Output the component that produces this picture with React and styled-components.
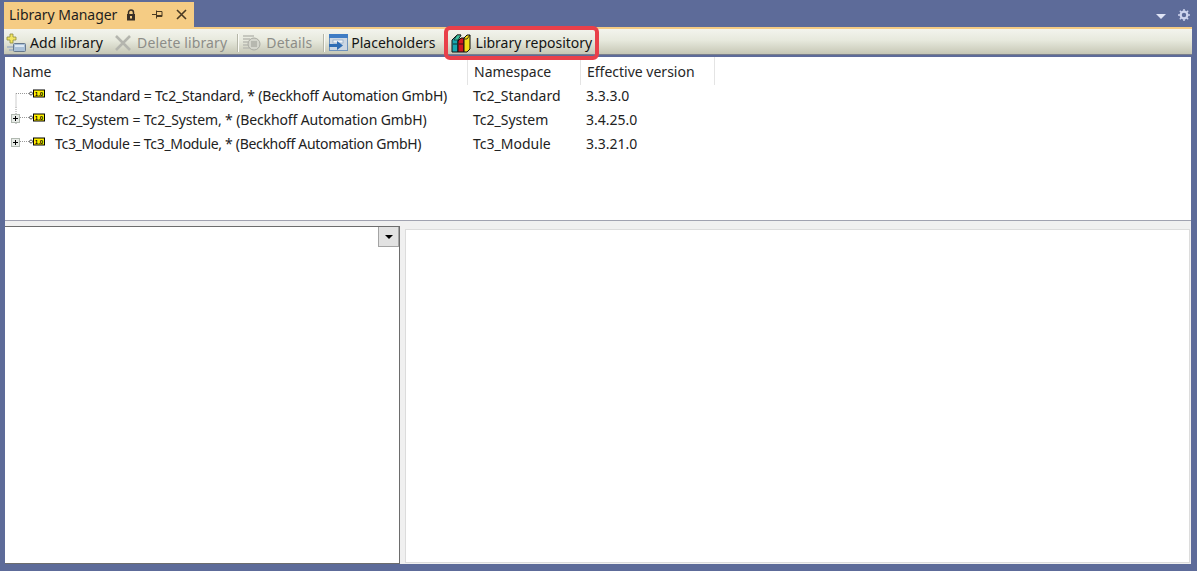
import React from 'react';
import styled, { createGlobalStyle } from 'styled-components';

const GlobalStyle = createGlobalStyle`
    html, body {
        margin: 0;
        padding: 0;
        background: #5d6b99;
    }
    * {
        box-sizing: border-box;
    }
`;

const Window = styled.div`
    width: 1197px;
    height: 571px;
    padding: 2px 5px 7px 4px;
    display: flex;
    flex-direction: column;
    overflow: hidden;
    background: #5d6b99;
    font-family: "Noto Sans", "Open Sans", sans-serif;
    font-size: 14px;
    color: #1b1b1b;
`;

const TitleRow = styled.div`
    height: 25px;
    display: flex;
    justify-content: space-between;
    flex-shrink: 0;
`;

const Tab = styled.div`
    width: 190px;
    height: 25px;
    display: flex;
    align-items: center;
    padding-left: 5px;
    background: #f5cc84;
    color: #1e1e1e;
`;

const TabTitle = styled.span`
    width: 117px;
    white-space: nowrap;
    letter-spacing: -0.03px;
`;

const TabIcon = styled.svg`
    display: block;
    flex-shrink: 0;
    margin-right: ${(props) => props.gap || 0}px;
`;

const WindowControls = styled.div`
    display: flex;
    align-items: flex-start;
    gap: 12px;
    padding: 7px 2px 0 0;
`;

const MenuArrow = styled.svg`
    display: block;
    margin-top: 5px;
`;

const Toolbar = styled.div`
    height: 28px;
    flex-shrink: 0;
    display: flex;
    align-items: center;
    padding: 2px 0 0 2px;
    border-top: 2px solid #f5cc84;
    background: linear-gradient(#f3f4ee, #e7e9dd 45%, #c6c7b5);
    border-bottom: 1px solid #7a7f8c;
`;

const ToolButton = styled.div`
    height: 24px;
    display: flex;
    align-items: center;
    gap: ${(props) => props.gap || 4}px;
    padding-right: ${(props) => props.pad || 4}px;
    white-space: nowrap;
    color: ${(props) => (props.disabled ? '#8d8d88' : '#141414')};
    letter-spacing: ${(props) => props.spacing || 0}px;
    position: relative;
`;

const Highlight = styled.div`
    position: absolute;
    left: -6px;
    right: -3px;
    top: -5px;
    bottom: -5px;
    border: 4px solid #e9404a;
    border-radius: 6px;
    pointer-events: none;
`;

const ToolSeparator = styled.div`
    width: 2px;
    height: 18px;
    margin: 0 3px 0 1px;
    background: #b5b6a8;
    border-right: 1px solid #fbfbf6;
`;

const ListPane = styled.div`
    height: 163px;
    flex-shrink: 0;
    margin: 2px 1px 0 1px;
    background: #ffffff;
`;

const HeaderRow = styled.div`
    height: 26px;
    display: flex;
`;

const HeaderCell = styled.div`
    width: ${(props) => props.width}px;
    height: 28px;
    padding: 5px 0 0 ${(props) => props.pad || 6}px;
    border-right: 1px solid #e4e4e4;
    color: #262626;
`;

const TreeRow = styled.div`
    height: 24px;
    display: flex;
    align-items: center;
`;

const TreeLead = styled.div`
    width: 50px;
    height: 24px;
    flex-shrink: 0;
`;

const TreeCell = styled.div`
    width: ${(props) => props.width}px;
    flex-shrink: 0;
    white-space: nowrap;
    color: #222222;
    letter-spacing: ${(props) => props.spacing || 0}px;
`;

const Splitter = styled.div`
    height: 6px;
    flex-shrink: 0;
    margin: 0 1px;
    background: #f0f0f0;
    border-top: 1px solid #a0a2b0;
`;

const BottomArea = styled.div`
    flex: 1;
    min-height: 0;
    margin: 0 1px;
    display: flex;
    background: #f0f0f0;
`;

const LeftPane = styled.div`
    width: 395px;
    display: flex;
    justify-content: flex-end;
    align-items: flex-start;
    background: #ffffff;
    border-top: 1px solid #6d6d6d;
    border-right: 1px solid #6d6d6d;
    border-bottom: 1px solid #6d6d6d;
`;

const ComboButton = styled.div`
    width: 21px;
    height: 20px;
    display: flex;
    align-items: center;
    justify-content: center;
    background: #e2e2e2;
    border: 1px solid #a4a4a4;
    border-top: 0;
`;

const ComboArrow = styled.div`
    width: 0;
    height: 0;
    border-left: 4px solid transparent;
    border-right: 4px solid transparent;
    border-top: 4px solid #000000;
`;

const RightPane = styled.div`
    flex: 1;
    margin: 3px 1px 1px 5px;
    background: #ffffff;
    border: 1px solid #dcdcdc;
`;

const BadgeText = styled.text`
    font-family: "Liberation Sans", sans-serif;
    font-size: 6px;
    font-weight: 700;
    fill: #000000;
    text-anchor: middle;
`;

const LockIcon = () => (
    <TabIcon width="10" height="12" viewBox="0 0 10 12" gap={16}>
        <path d="M2.5 5.5V3.5a2.5 2.5 0 0 1 5 0v2" fill="none" stroke="#3a3026" strokeWidth="1.5" />
        <rect x="1" y="5" width="8" height="6.5" fill="#3a3026" />
        <rect x="4" y="7" width="2" height="2.5" fill="#f5cc84" />
    </TabIcon>
);

const PinIcon = () => (
    <TabIcon width="11" height="11" viewBox="0 0 11 11" gap={13}>
        <path d="M0 5.5h4M4.5 1.5v8M4.5 2.5h5.5v5h-5.5M4.5 6.5h5.5" fill="none" stroke="#4a3a22" strokeWidth="1" />
    </TabIcon>
);

const CloseIcon = () => (
    <TabIcon width="11" height="11" viewBox="0 0 11 11">
        <path d="M1 1l9 9M10 1l-9 9" stroke="#4a3a22" strokeWidth="1.6" />
    </TabIcon>
);

const AddLibraryIcon = () => (
    <svg width="21" height="20" viewBox="0 0 21 20">
        <rect x="7.5" y="10.5" width="12" height="8" rx="1" fill="#a9c0d8" stroke="#66788c" />
        <rect x="9" y="12" width="9" height="2" fill="#dde8f2" />
        <path d="M1 14h6M3 17h4" stroke="#9fb0c2" strokeWidth="1.5" />
        <path d="M4 1h3v3h3v3H7v3H4V7H1V4h3z" fill="#f2e460" stroke="#8d8a3c" strokeWidth="0.8" />
    </svg>
);

const DeleteIcon = () => (
    <svg width="19" height="18" viewBox="0 0 19 18">
        <path d="M2 2l14 14M16 2L2 16" stroke="#b4b5ae" strokeWidth="2.6" />
    </svg>
);

const DetailsIcon = () => (
    <svg width="20" height="18" viewBox="0 0 20 18">
        <path d="M1 2h11M1 5h7M1 8h5M1 11h5M1 14h7" stroke="#b9bab2" strokeWidth="1.4" />
        <circle cx="12" cy="10" r="6" fill="#d4d5cc" stroke="#a9aaa2" />
        <path d="M9 8h6M9 10h6M9 12h6" stroke="#999a92" strokeWidth="1" />
    </svg>
);

const PlaceholderIcon = () => (
    <svg width="20" height="18" viewBox="0 0 20 18">
        <rect x="1.5" y="0.5" width="18" height="16" fill="#cdd7e2" stroke="#6f93bd" />
        <rect x="1" y="0" width="19" height="4" fill="#3f7cc4" />
        <rect x="5" y="6" width="10" height="3" fill="#f0f4f8" stroke="#7f9cbc" strokeWidth="0.6" />
        <path d="M1 10h8V7l6 4.5-6 4.5v-3H1z" fill="#2f6db5" />
    </svg>
);

const BooksIcon = () => (
    <svg width="21" height="20" viewBox="0 0 21 20">
        <path d="M2 7L7 2h4L8 7v12H2z" fill="#18a8b0" stroke="#101010" />
        <path d="M7 2h4L8 7H4z" fill="#3cc0a0" stroke="#101010" strokeWidth="0.6" />
        <path d="M8 8l3-3h3v14H8z" fill="#d01820" stroke="#101010" />
        <path d="M14 5l3-3h3v14l-3 3h-3z" fill="#f2dc18" stroke="#101010" />
        <path d="M14 6h3l3-4" fill="none" stroke="#101010" strokeWidth="0.8" />
        <path d="M3 11h4M9 11h4" stroke="#101010" strokeWidth="0.8" />
    </svg>
);

// dotted tree lines with the optional expander box, and the library badge
const TreeGlyph = ({ expandable, vertical }) => (
    <svg width="50" height="24" viewBox="0 0 50 24">
        <path d={`${vertical} M11 10.5h14`} stroke="#9a9a9a" strokeDasharray="1 1" fill="none" />
        {expandable && (
            <g>
                <rect x="6.5" y="7.5" width="8" height="8" fill="#e8ece8" stroke="#b0b8b0" />
                <path d="M8 11.5h5M10.5 9v5" stroke="#000" />
            </g>
        )}
        <circle cx="26" cy="10.5" r="1.5" fill="#fff" stroke="#555" />
        <rect x="28.5" y="7" width="11" height="7" fill="#ffee00" stroke="#000" />
        <BadgeText x="34" y="12.7">1.0</BadgeText>
    </svg>
);

const libraries = [
    { name: 'Tc2_Standard = Tc2_Standard, * (Beckhoff Automation GmbH)', namespace: 'Tc2_Standard', version: '3.3.3.0', vertical: 'M11 10.5V24', spacing: -0.19 },
    { name: 'Tc2_System = Tc2_System, * (Beckhoff Automation GmbH)', namespace: 'Tc2_System', version: '3.4.25.0', vertical: 'M11 0V18', expandable: true, spacing: -0.13 },
    { name: 'Tc3_Module = Tc3_Module, * (Beckhoff Automation GmbH)', namespace: 'Tc3_Module', version: '3.3.21.0', vertical: '', expandable: true, spacing: -0.32 },
];

export default function App() {
    return (
        <Window>
            <GlobalStyle />
            <TitleRow>
                <Tab>
                    <TabTitle>Library Manager</TabTitle>
                    <LockIcon />
                    <PinIcon />
                    <CloseIcon />
                </Tab>
                <WindowControls>
                    <MenuArrow width="10" height="5" viewBox="0 0 10 5">
                        <path d="M0 0h10L5 5z" fill="#dfe4f5" />
                    </MenuArrow>
                    <svg width="12" height="12" viewBox="0 0 13 13">
                        <circle cx="6.5" cy="6.5" r="3.6" fill="none" stroke="#ced4ee" strokeWidth="2.4" />
                        <path d="M6.5 0v3M6.5 10v3M0 6.5h3M10 6.5h3M2 2l2 2M9 9l2 2M11 2L9 4M4 9l-2 2" stroke="#ced4ee" strokeWidth="1.6" />
                    </svg>
                </WindowControls>
            </TitleRow>
            <Toolbar>
                <ToolButton gap={3} pad={11} spacing={0.1}><AddLibraryIcon />Add library</ToolButton>
                <ToolButton disabled gap={4} pad={9} spacing={0.14}><DeleteIcon />Delete library</ToolButton>
                <ToolSeparator />
                <ToolButton disabled gap={4} pad={10} spacing={0.14}><DetailsIcon />Details</ToolButton>
                <ToolSeparator />
                <ToolButton gap={3} pad={14}><PlaceholderIcon />Placeholders</ToolButton>
                <ToolButton gap={5} pad={4}>
                    <BooksIcon />Library repository
                    <Highlight />
                </ToolButton>
            </Toolbar>
            <ListPane>
                <HeaderRow>
                    <HeaderCell width={463} pad={7}>Name</HeaderCell>
                    <HeaderCell width={113}>Namespace</HeaderCell>
                    <HeaderCell width={134}>Effective version</HeaderCell>
                </HeaderRow>
                {libraries.map((lib) => (
                    <TreeRow key={lib.namespace}>
                        <TreeLead>
                            <TreeGlyph expandable={lib.expandable} vertical={lib.vertical} />
                        </TreeLead>
                        <TreeCell width={418} spacing={lib.spacing}>{lib.name}</TreeCell>
                        <TreeCell width={113}>{lib.namespace}</TreeCell>
                        <TreeCell width={120}>{lib.version}</TreeCell>
                    </TreeRow>
                ))}
            </ListPane>
            <Splitter />
            <BottomArea>
                <LeftPane>
                    <ComboButton><ComboArrow /></ComboButton>
                </LeftPane>
                <RightPane />
            </BottomArea>
        </Window>
    );
}
